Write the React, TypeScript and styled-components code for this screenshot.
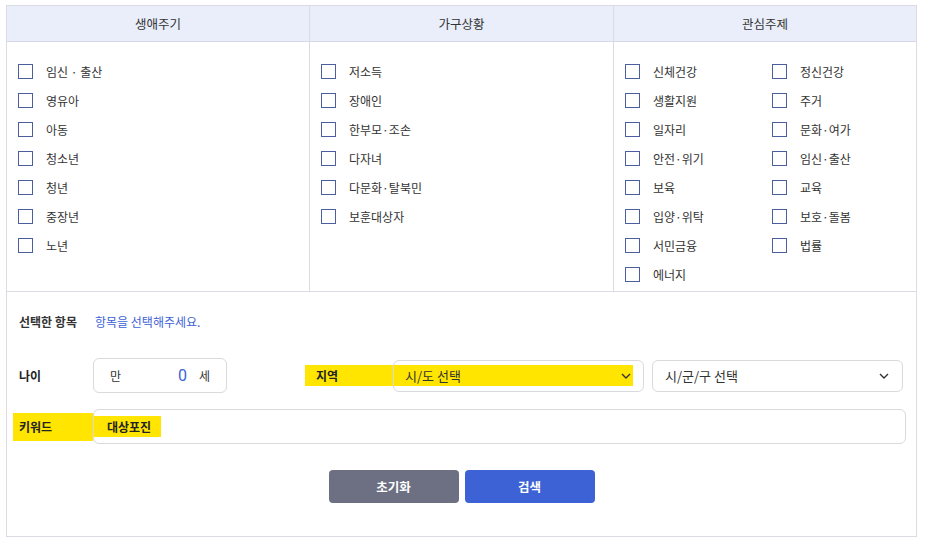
import React from "react";
import styled, { createGlobalStyle } from "styled-components";

const Global = createGlobalStyle`
  html, body { margin: 0; padding: 0; background: #fff; }
  body { font-family: "Noto Sans CJK KR", "Noto Sans", sans-serif; color: #333; }
  * { box-sizing: border-box; }
`;

const Panel = styled.div`
  margin: 5px 0 0 6px;
  width: 911px;
  height: 532px;
  border: 1px solid #dadbe3;
  display: flex;
  flex-direction: column;
`;

const Grid = styled.div`
  display: grid;
  grid-template-columns: 302px 304px 1fr;
  border-bottom: 1px solid #dadbe3;
`;

const HeadCell = styled.div<{ $first?: boolean }>`
  height: 36px;
  background: #e9eefa;
  border-bottom: 1px solid #d6d9e4;
  border-left: ${(p) => (p.$first ? "none" : "1px solid #dadbe3")};
  display: flex;
  align-items: center;
  justify-content: center;
  font-size: 12.5px;
  color: #333;
`;

const BodyCell = styled.div<{ $first?: boolean; $cols?: number }>`
  border-left: ${(p) => (p.$first ? "none" : "1px solid #dadbe3")};
  padding: 22px 11px 9px 11px;
  display: grid;
  grid-template-columns: ${(p) => (p.$cols === 2 ? "147px 1fr" : "1fr")};
  grid-auto-rows: 15px;
  row-gap: 14px;
  align-content: start;
`;

const Item = styled.label`
  display: flex;
  align-items: center;
  gap: 13px;
  font-size: 12px;
  color: #333;
  height: 15px;
  white-space: nowrap;
`;

const Box = styled.span`
  width: 15px;
  height: 15px;
  border: 1.3px solid #4b5e9e;
  flex: none;
`;

const Lower = styled.div`
  flex: 1;
  padding: 21px 12px 0 6px;
  display: flex;
  flex-direction: column;
`;

const Row = styled.div<{ $mt: number }>`
  display: flex;
  align-items: center;
  margin-top: ${(p) => p.$mt}px;
`;

const Label = styled.div<{ $hl?: boolean }>`
  width: 80px;
  flex: none;
  padding-left: 6px;
  height: ${(p) => (p.$hl ? 28 : 20)}px;
  display: flex;
  align-items: center;
  font-size: 12px;
  font-weight: 700;
  color: #222;
  background: ${(p) => (p.$hl ? "#ffe500" : "transparent")};
`;

const SelectedLabel = styled.div`
  width: 82px;
  padding-left: 6px;
  font-size: 12px;
  font-weight: 700;
  color: #333;
`;

const Hint = styled.div`
  font-size: 12px;
  color: #3d62d6;
`;

const AgeBox = styled.div`
  width: 134px;
  height: 35px;
  border: 1px solid #d9d9de;
  border-radius: 6px;
  display: flex;
  align-items: center;
  padding: 0 16px;
  font-size: 12px;
  color: #333;
`;

const AgeValue = styled.span`
  margin-left: auto;
  margin-right: 12px;
  color: #3d62d6;
  font-size: 16px;
  font-family: "Roboto", "Noto Sans", sans-serif;
`;

const RegionLabel = styled.div`
  margin-left: 78px;
  width: 88px;
  height: 21px;
  padding-left: 11px;
  display: flex;
  align-items: center;
  background: #ffe500;
  font-size: 12px;
  font-weight: 700;
  color: #222;
`;

const Select = styled.div<{ $w: number; $ml?: number }>`
  width: ${(p) => p.$w}px;
  height: 32px;
  margin-left: ${(p) => p.$ml ?? 0}px;
  border: 1px solid #d9d9de;
  border-radius: 6px;
  display: flex;
  align-items: center;
  font-size: 13px;
  color: #333;
`;

const SelectInner = styled.div<{ $hl?: boolean }>`
  flex: 1;
  height: 21px;
  display: flex;
  align-items: center;
  justify-content: space-between;
  padding: ${(p) => (p.$hl ? "0 2px 0 11px" : "0 13px 0 12px")};
  margin-right: ${(p) => (p.$hl ? 10 : 0)}px;
  background: ${(p) => (p.$hl ? "#ffe500" : "transparent")};
`;

const Chevron = () => (
  <svg width="10" height="6" viewBox="0 0 10 6" fill="none">
    <path d="M1 1l4 4 4-4" stroke="#333" strokeWidth="1.4" />
  </svg>
);

const KeywordBox = styled.div`
  flex: 1;
  height: 35px;
  border: 1px solid #d9d9de;
  border-radius: 6px;
  display: flex;
  align-items: center;
  margin-right: -2px;
`;

const KeywordText = styled.span`
  height: 21px;
  display: flex;
  align-items: center;
  padding: 0 10px 0 13px;
  background: #ffe500;
  font-size: 12px;
  font-weight: 700;
  color: #222;
`;

const Buttons = styled.div`
  display: flex;
  justify-content: center;
  gap: 6px;
  margin-top: 26px;
  margin-left: 6px;
`;

const Btn = styled.button<{ $primary?: boolean }>`
  width: 130px;
  height: 33px;
  border: none;
  border-radius: 4px;
  background: ${(p) => (p.$primary ? "#3d62d6" : "#6d7083")};
  color: #fff;
  font-family: inherit;
  font-size: 12.5px;
  font-weight: 700;
`;

const col1 = ["임신 · 출산", "영유아", "아동", "청소년", "청년", "중장년", "노년"];
const col2 = ["저소득", "장애인", "한부모·조손", "다자녀", "다문화·탈북민", "보훈대상자"];
const col3 = [
  "신체건강", "정신건강", "생활지원", "주거", "일자리", "문화·여가",
  "안전·위기", "임신·출산", "보육", "교육", "입양·위탁", "보호·돌봄",
  "서민금융", "법률", "에너지",
];

export default function App() {
  return (
    <>
      <Global />
      <Panel>
        <Grid>
          <HeadCell $first>생애주기</HeadCell>
          <HeadCell>가구상황</HeadCell>
          <HeadCell>관심주제</HeadCell>
          <BodyCell $first>
            {col1.map((t) => (
              <Item key={t}><Box />{t}</Item>
            ))}
          </BodyCell>
          <BodyCell>
            {col2.map((t) => (
              <Item key={t}><Box />{t}</Item>
            ))}
          </BodyCell>
          <BodyCell $cols={2}>
            {col3.map((t) => (
              <Item key={t}><Box />{t}</Item>
            ))}
          </BodyCell>
        </Grid>
        <Lower>
          <Row $mt={0}>
            <SelectedLabel>선택한 항목</SelectedLabel>
            <Hint>항목을 선택해주세요.</Hint>
          </Row>
          <Row $mt={28}>
            <Label>나이</Label>
            <AgeBox>
              만<AgeValue>0</AgeValue>세
            </AgeBox>
            <RegionLabel>지역</RegionLabel>
            <Select $w={251}>
              <SelectInner $hl>
                시/도 선택
                <Chevron />
              </SelectInner>
            </Select>
            <Select $w={251} $ml={8}>
              <SelectInner>
                시/군/구 선택
                <Chevron />
              </SelectInner>
            </Select>
          </Row>
          <Row $mt={16}>
            <Label $hl>키워드</Label>
            <KeywordBox>
              <KeywordText>대상포진</KeywordText>
            </KeywordBox>
          </Row>
          <Buttons>
            <Btn>초기화</Btn>
            <Btn $primary>검색</Btn>
          </Buttons>
        </Lower>
      </Panel>
    </>
  );
}
